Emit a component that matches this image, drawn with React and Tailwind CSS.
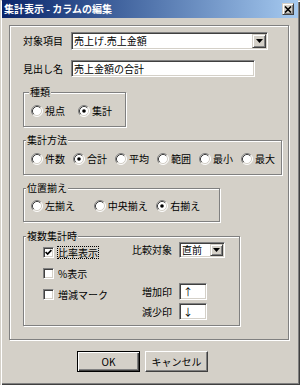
import React from "react";

function Radio({ checked }) {
  return (
    <svg width="12" height="12" viewBox="0 0 12 12" className="shrink-0">
      <circle cx="6" cy="6" r="5" fill="#fff" />
      <path d="M2.11 9.89A5.5 5.5 0 0 1 9.89 2.11" stroke="#808080" fill="none" />
      <path d="M2.82 9.18A4.5 4.5 0 0 1 9.18 2.82" stroke="#404040" fill="none" />
      <path d="M9.89 2.11A5.5 5.5 0 0 1 2.11 9.89" stroke="#fff" fill="none" />
      <path d="M9.18 2.82A4.5 4.5 0 0 1 2.82 9.18" stroke="#d4d0c8" fill="none" />
      {checked && <circle cx="6" cy="6" r="1.8" fill="#000" />}
    </svg>
  );
}

function RadioItem({ label, checked, className = "" }) {
  return (
    <div className={`flex items-center gap-[2px] ${className}`}>
      <Radio checked={checked} />
      <span className="leading-[12px]">{label}</span>
    </div>
  );
}

function Checkbox({ checked }) {
  return (
    <div className="flex h-[11px] w-[11px] shrink-0 items-center justify-center border border-[#808080] border-r-white border-b-white bg-white shadow-[inset_1px_1px_0_#404040,inset_-1px_-1px_0_#d4d0c8]">
      {checked && (
        <svg width="7" height="7" viewBox="0 0 7 7">
          <polyline points="0.6,3 2.6,5 6.4,1.2" stroke="#000" strokeWidth="1.7" fill="none" />
        </svg>
      )}
    </div>
  );
}

function DropBtn({ w = "w-[14px]" }) {
  return (
    <div
      className={`flex h-full ${w} shrink-0 items-center justify-center border border-[#d4d0c8] border-r-[#404040] border-b-[#404040] bg-[#d4d0c8] shadow-[inset_1px_1px_0_#fff,inset_-1px_-1px_0_#808080]`}
    >
      <svg width="7" height="4" viewBox="0 0 7 4">
        <polygon points="0,0 7,0 3.5,4" fill="#000" />
      </svg>
    </div>
  );
}

const sunken =
  "border border-[#808080] border-r-white border-b-white bg-white shadow-[inset_1px_1px_0_#404040,inset_-1px_-1px_0_#d4d0c8]";

function Group({ title, className = "", titleLeft = "left-[2px]", children }) {
  return (
    <div
      className={`relative shrink-0 border border-[#808080] shadow-[1px_1px_0_#fff,inset_1px_1px_0_#fff] ${className}`}
    >
      <span className={`absolute -top-[7px] ${titleLeft} bg-[#d4d0c8] px-[1px] leading-[12px]`}>
        {title}
      </span>
      {children}
    </div>
  );
}

export default function App() {
  return (
    <div className="flex h-[385px] w-[300px] flex-col bg-[#d4d0c8] font-['Noto_Sans_CJK_JP',sans-serif] text-[10px] leading-[12px] text-black shadow-[inset_1px_1px_0_#d4d0c8,inset_2px_2px_0_#fff,inset_-1px_-1px_0_#404040,inset_-2px_-2px_0_#808080]">
      {/* Title bar */}
      <div className="mx-[2px] flex h-[18px] shrink-0 items-center justify-between bg-linear-to-r from-[#0a246a] to-[#a6caf0] pl-[2px] pr-[4px]">
        <span className="font-bold leading-[18px] text-white">集計表示 - カラムの編集</span>
        <div className="flex h-[12px] w-[12px] items-center justify-center border border-[#d4d0c8] border-r-[#404040] border-b-[#404040] bg-[#d4d0c8] shadow-[inset_1px_1px_0_#fff,inset_-1px_-1px_0_#808080]">
          <svg width="8" height="7" viewBox="0 0 8 7">
            <path d="M1 0.5L7 6.5M7 0.5L1 6.5" stroke="#000" strokeWidth="1.6" />
          </svg>
        </div>
      </div>

      {/* Panel */}
      <div className="ml-[9px] mt-[7px] flex h-[315px] w-[280px] shrink-0 flex-col border border-[#808080] pl-[13px] pt-[6px] shadow-[1px_1px_0_#fff,inset_1px_1px_0_#fff]">
        <div className="flex h-[18px] items-center">
          <span className="w-[48px]">対象項目</span>
          <div className={`flex h-[18px] w-[197px] p-[1px] ${sunken}`}>
            <span className="flex-1 pl-[1px] leading-[14px]">売上げ.売上金額</span>
            <DropBtn />
          </div>
        </div>

        <div className="mt-[10px] flex h-[17px] items-center">
          <span className="w-[48px]">見出し名</span>
          <div className={`flex h-[17px] w-[184px] items-center pl-[2px] ${sunken}`}>
            <span className="leading-[13px]">売上金額の合計</span>
          </div>
        </div>

        <Group title="種類" titleLeft="left-[5px]" className="mt-[15px] h-[35px] w-[103px]">
          <div className="flex h-full items-center gap-[13px] pl-[7px] pt-[2px]">
            <RadioItem label="視点" />
            <RadioItem label="集計" checked />
          </div>
        </Group>

        <Group title="集計方法" className="mt-[13px] h-[35px] w-[259px]">
          <div className="flex h-full items-center gap-[8px] pl-[7px] pt-[2px]">
            <RadioItem label="件数" />
            <RadioItem label="合計" checked />
            <RadioItem label="平均" />
            <RadioItem label="範囲" />
            <RadioItem label="最小" />
            <RadioItem label="最大" />
          </div>
        </Group>

        <Group title="位置揃え" className="mt-[13px] h-[34px] w-[197px]">
          <div className="flex h-full items-center pl-[7px] pt-[2px]">
            <RadioItem label="左揃え" className="w-[63px]" />
            <RadioItem label="中央揃え" className="w-[63px]" />
            <RadioItem label="右揃え" checked className="w-[63px]" />
          </div>
        </Group>

        <Group title="複数集計時" className="mt-[14px] h-[90px] w-[217px]">
          <div className="flex">
            <div className="flex w-[108px] flex-col pl-[19px] pt-[5px]">
              <div className="flex h-[21px] items-center gap-[3px]">
                <Checkbox checked />
                <span className="border border-dotted border-black leading-[11px]">比率表示</span>
              </div>
              <div className="flex h-[21px] items-center gap-[4px]">
                <Checkbox />
                <span>%表示</span>
              </div>
              <div className="flex h-[21px] items-center gap-[4px]">
                <Checkbox />
                <span>増減マーク</span>
              </div>
            </div>
            <div className="flex flex-col pt-[5px]">
              <div className="flex h-[16px] items-center">
                <span className="mr-[7px] w-[40px] text-right">比較対象</span>
                <div className={`flex h-[16px] w-[46px] p-[1px] ${sunken}`}>
                  <span className="flex-1 pl-[1px] leading-[12px]">直前</span>
                  <DropBtn w="w-[13px]" />
                </div>
              </div>
              <div className="mt-[25px] flex h-[17px] items-center">
                <span className="mr-[7px] w-[40px] text-right">増加印</span>
                <div className={`flex h-[17px] w-[28px] items-center pl-[3px] ${sunken}`}>
                  <span className="leading-[13px]">↑</span>
                </div>
              </div>
              <div className="mt-[3px] flex h-[17px] items-center">
                <span className="mr-[7px] w-[40px] text-right">減少印</span>
                <div className={`flex h-[17px] w-[28px] items-center pl-[3px] ${sunken}`}>
                  <span className="leading-[13px]">↓</span>
                </div>
              </div>
            </div>
          </div>
        </Group>
      </div>

      {/* Buttons */}
      <div className="mt-[11px] flex gap-[5px] pl-[77px]">
        <button className="flex h-[21px] w-[63px] items-center justify-center border border-black bg-[#d4d0c8] shadow-[inset_1px_1px_0_#fff,inset_-1px_-1px_0_#404040,inset_-2px_-2px_0_#808080]">
          OK
        </button>
        <button className="flex h-[21px] w-[63px] items-center justify-center border border-white border-r-[#404040] border-b-[#404040] bg-[#d4d0c8] shadow-[inset_-1px_-1px_0_#808080]">
          キャンセル
        </button>
      </div>
    </div>
  );
}
